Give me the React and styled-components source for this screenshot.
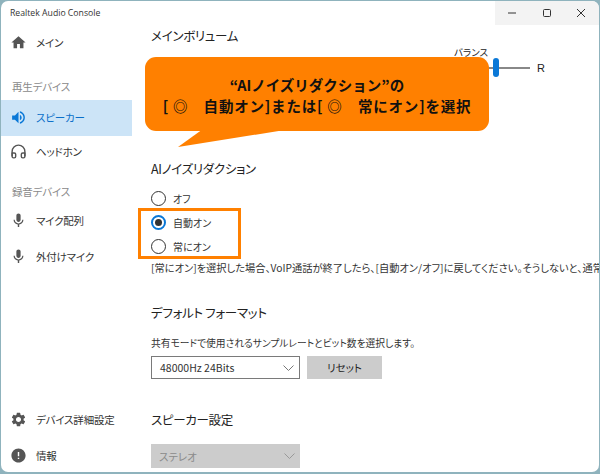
import React from "react";
import styled, { createGlobalStyle } from "styled-components";
import { MdHome, MdVolumeUp, MdMic, MdSettings, MdError } from "react-icons/md";
import { FiHeadphones } from "react-icons/fi";

const GlobalStyle = createGlobalStyle`
  html, body {
    margin: 0;
    padding: 0;
    width: 600px;
    height: 474px;
    overflow: hidden;
    background: #8fb3bd;
  }
  * {
    box-sizing: border-box;
  }
`;

const Desktop = styled.div`
  width: 600px;
  height: 474px;
  padding: 1px 1px 2px 1px;
  font-family: "Noto Sans CJK JP", "Noto Sans", sans-serif;
  font-feature-settings: "palt";
  color: #222;
`;

const Frame = styled.div`
  position: relative;
  width: 100%;
  height: 100%;
  background: #fff;
  border-radius: 7px;
  overflow: hidden;
  display: flex;
  flex-direction: column;
`;

const TitleBar = styled.div`
  height: 24px;
  flex: none;
  display: flex;
  justify-content: space-between;
`;

const AppTitle = styled.div`
  padding: 4px 0 0 9px;
  font-family: "Open Sans", "Noto Sans", sans-serif;
  font-size: 8.7px;
  line-height: 16px;
  color: #333;
`;

const WindowButtons = styled.div`
  width: 104px;
  background: #f3f3f3;
  display: flex;
`;

const WindowButton = styled.div`
  width: 34.6px;
  display: flex;
  align-items: center;
  justify-content: center;

  svg {
    width: 10px;
    height: 10px;
    stroke: #333;
    stroke-width: 1;
    fill: none;
  }
`;

const Body = styled.div`
  flex: 1;
  min-height: 0;
  display: flex;
`;

const Sidebar = styled.nav`
  width: 131px;
  flex: none;
  display: flex;
  flex-direction: column;
`;

const NavRow = styled.div`
  height: ${(props) => props.$h || 36}px;
  display: flex;
  align-items: center;
  gap: 9px;
  padding: 0 0 2px 9px;
  font-size: 10.5px;
  letter-spacing: -0.2px;
  background: ${(props) => (props.$active ? "#cce4f7" : "transparent")};
  color: ${(props) => (props.$active ? "#0a6fc9" : "#333")};

  svg {
    width: 17px;
    height: 17px;
    flex: none;
    color: ${(props) => (props.$active ? "#0a78d7" : "#555")};
  }
`;

const NavLabel = styled.div`
  margin-top: ${(props) => props.$top}px;
  height: ${(props) => props.$h || 26}px;
  padding: 0 0 2px 11px;
  display: flex;
  align-items: center;
  font-size: 10.5px;
  letter-spacing: -0.2px;
  color: #8a8a8a;
`;

const NavBottom = styled.div`
  margin-top: auto;
  margin-bottom: -2px;
`;

const Main = styled.main`
  flex: 1;
  min-width: 0;
  overflow: hidden;
  padding: 1px 0 0 19px;
`;

const Heading = styled.h2`
  margin: ${(props) => props.$top || 0}px 0 0;
  height: 20px;
  font-size: 12.5px;
  letter-spacing: -0.3px;
  line-height: 20px;
  font-weight: 400;
  color: #222;
  white-space: nowrap;
`;

const Balance = styled.div`
  margin-left: 303px;
  width: 92px;
  font-size: 9.5px;
  height: 113px;
`;

const BalanceLabel = styled.div`
  line-height: 12px;
`;

const BalanceSlider = styled.div`
  display: flex;
  align-items: center;
  height: 20px;
  font-family: "Liberation Sans", sans-serif;
  font-size: 11px;
`;

const Track = styled.div`
  position: relative;
  width: 76px;
  height: 1.5px;
  background: #888;
  margin-right: 7px;
`;

const Thumb = styled.div`
  position: absolute;
  left: 39px;
  top: -9px;
  width: 6px;
  height: 19px;
  border-radius: 3px;
  background: #0a78d7;
`;

const RadioList = styled.div`
  margin-top: 7px;
  display: flex;
  flex-direction: column;
`;

const RadioRow = styled.div`
  height: 24px;
  display: flex;
  align-items: center;
  gap: 7px;
  font-size: 10px;
  color: #333;
`;

const RadioMark = styled.span`
  width: 15px;
  height: 15px;
  border-radius: 50%;
  flex: none;
  background: #fff;
  border: ${(props) => (props.$checked ? "2px solid #0a78d7" : "1.5px solid #333")};
  display: flex;
  align-items: center;
  justify-content: center;

  &::after {
    content: "";
    display: ${(props) => (props.$checked ? "block" : "none")};
    width: 7px;
    height: 7px;
    border-radius: 50%;
    background: #333;
  }
`;

const Note = styled.p`
  margin: 3px 0 0;
  height: 14px;
  line-height: 14px;
  font-size: 10.25px;
  color: #333;
  white-space: nowrap;
`;

const Description = styled.p`
  margin: 13px 0 0;
  height: 14px;
  line-height: 14px;
  font-size: 9.75px;
  color: #333;
  white-space: nowrap;
`;

const FormatRow = styled.div`
  margin-top: 6px;
  display: flex;
  gap: 7px;
`;

const Select = styled.div`
  width: 149px;
  height: ${(props) => (props.$disabled ? 24 : 23)}px;
  padding: 0 5px 0 8px;
  display: flex;
  align-items: center;
  justify-content: space-between;
  font-size: 10.5px;
  color: ${(props) => (props.$disabled ? "#8a8a8a" : "#333")};
  background: ${(props) => (props.$disabled ? "#cccccc" : "#fff")};
  border: ${(props) => (props.$disabled ? "none" : "1px solid #7a7a7a")};

  svg {
    width: 11px;
    height: 6px;
    fill: none;
    stroke: ${(props) => (props.$disabled ? "#999" : "#777")};
    stroke-width: 1;
  }
`;

const ResetButton = styled.div`
  width: 75px;
  height: 23px;
  display: flex;
  align-items: center;
  justify-content: center;
  font-size: 10.5px;
  background: #cccccc;
  color: #222;
`;

const DisabledField = styled.div`
  margin-top: 14px;
`;

const Callout = styled.div`
  position: absolute;
  left: 144px;
  top: 56px;
  width: 344px;
  height: 74px;
  padding-top: 17px;
  border-radius: 11px;
  background: #ff8000;
  text-align: center;
  font-size: 14.5px;
  line-height: 21px;
  font-weight: 700;
  font-feature-settings: normal;
  color: #111;
`;

const CalloutSpaced = styled.span`
  letter-spacing: 0.8px;
  white-space: pre;
`;

const CalloutTail = styled.svg`
  position: absolute;
  left: 176px;
  top: 128px;
  width: 120px;
  height: 20px;
  fill: #ff8000;
`;

const Highlight = styled.div`
  position: absolute;
  left: 137px;
  top: 207px;
  width: 103px;
  height: 51px;
  border: 3px solid #ff8000;
`;

const Chevron = () => (
  <svg viewBox="0 0 11 6">
    <path d="M0.5 0.5l5 5 5-5" />
  </svg>
);

const App = () => {
  return (
    <Desktop>
      <GlobalStyle />
      <Frame>
        <TitleBar>
          <AppTitle>Realtek Audio Console</AppTitle>
          <WindowButtons>
            <WindowButton>
              <svg viewBox="0 0 10 10">
                <path d="M1 5h8" />
              </svg>
            </WindowButton>
            <WindowButton>
              <svg viewBox="0 0 10 10">
                <rect x="1.5" y="1.5" width="7" height="7" rx="1" />
              </svg>
            </WindowButton>
            <WindowButton>
              <svg viewBox="0 0 10 10">
                <path d="M1 1l8 8M9 1l-8 8" />
              </svg>
            </WindowButton>
          </WindowButtons>
        </TitleBar>
        <Body>
          <Sidebar>
            <NavRow>
              <MdHome />
              メイン
            </NavRow>
            <NavLabel $top={13}>再生デバイス</NavLabel>
            <NavRow $active>
              <MdVolumeUp />
              スピーカー
            </NavRow>
            <NavRow $h={32}>
              <FiHeadphones />
              ヘッドホン
            </NavRow>
            <NavLabel $top={13} $h={22}>
              録音デバイス
            </NavLabel>
            <NavRow>
              <MdMic />
              マイク配列
            </NavRow>
            <NavRow>
              <MdMic />
              外付けマイク
            </NavRow>
            <NavBottom>
              <NavRow>
                <MdSettings />
                デバイス詳細設定
              </NavRow>
              <NavRow>
                <MdError />
                情報
              </NavRow>
            </NavBottom>
          </Sidebar>
          <Main>
            <Heading>メインボリューム</Heading>
            <Balance>
              <BalanceLabel>バランス</BalanceLabel>
              <BalanceSlider>
                <Track>
                  <Thumb />
                </Track>
                R
              </BalanceSlider>
            </Balance>
            <Heading>AIノイズリダクション</Heading>
            <RadioList>
              <RadioRow>
                <RadioMark />
                オフ
              </RadioRow>
              <RadioRow>
                <RadioMark $checked />
                自動オン
              </RadioRow>
              <RadioRow>
                <RadioMark />
                常にオン
              </RadioRow>
            </RadioList>
            <Note>
              [常にオン]を選択した場合、VoIP通話が終了したら、[自動オン/オフ]に戻してください。そうしないと、通常の音声にも影響します。
            </Note>
            <Heading $top={28}>デフォルト フォーマット</Heading>
            <Description>共有モードで使用されるサンプルレートとビット数を選択します。</Description>
            <FormatRow>
              <Select>
                48000Hz 24Bits
                <Chevron />
              </Select>
              <ResetButton>リセット</ResetButton>
            </FormatRow>
            <Heading $top={31}>スピーカー設定</Heading>
            <DisabledField>
              <Select $disabled>
                ステレオ
                <Chevron />
              </Select>
            </DisabledField>
          </Main>
        </Body>
        <Callout>
          “AIノイズリダクション”の
          <br />
          <CalloutSpaced>{"[ ◎　自動オン]または[ ◎　常にオン]を選択"}</CalloutSpaced>
        </Callout>
        <CalloutTail viewBox="0 0 120 20">
          <path d="M26 0L1 18 114 0z" />
        </CalloutTail>
        <Highlight />
      </Frame>
    </Desktop>
  );
};

export default App;
